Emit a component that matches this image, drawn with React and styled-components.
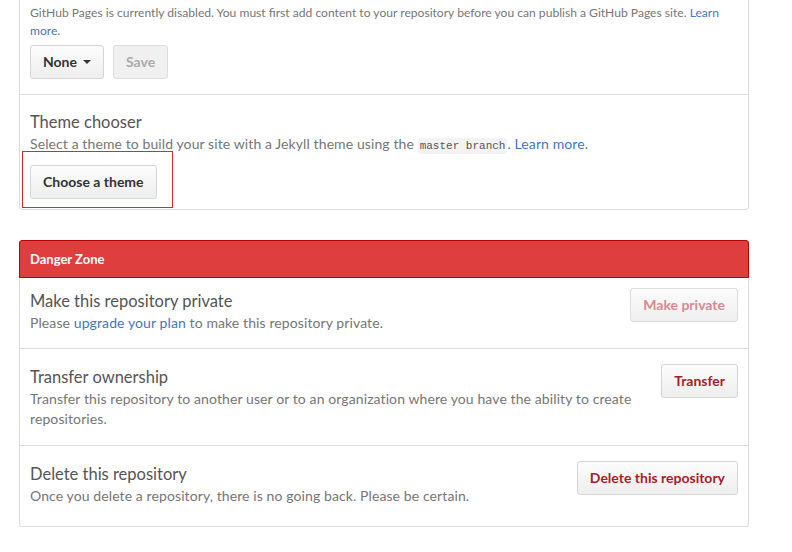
import React from 'react';
import styled, { createGlobalStyle } from 'styled-components';

const GlobalStyle = createGlobalStyle`
    body {
        margin: 0;
        background: #fff;
        font-family: Lato, "Liberation Sans", sans-serif;
        font-size: 13px;
        color: #333;
    }
`;

const Page = styled.div`
    width: 730px;
    margin: -12px 0 0 19px;
    display: flex;
    flex-direction: column;
    gap: 30px;
`;

const Box = styled.div`
    border: 1px solid #ddd;
    border-radius: 3px;
    background: #fff;
`;

const Section = styled.div`
    position: relative;
    padding: ${(p) => p.$pad || '15px 10px'};
    & + & {
        border-top: 1px solid #ddd;
    }
`;

const Note = styled.p`
    margin: 0;
    font-size: 12.1px;
    line-height: 18px;
    color: #767676;
`;

const Link = styled.a`
    color: #4078c0;
    text-decoration: none;
`;

const ButtonRow = styled.div`
    display: flex;
    gap: 9px;
    margin-top: ${(p) => p.$top || '5px'};
`;

const Button = styled.button`
    font-family: inherit;
    font-size: 14px;
    font-weight: 700;
    line-height: 20px;
    padding: 6px 12px;
    border: 1px solid #d5d5d5;
    border-radius: 3px;
    background: linear-gradient(#fcfcfc, #eee);
    color: ${(p) => (p.$danger ? '#a71d2a' : '#333')};
    white-space: nowrap;
    cursor: pointer;
    display: inline-flex;
    align-items: center;
    gap: 6px;
    flex-shrink: 0;
    &:disabled {
        cursor: default;
        color: ${(p) => (p.$danger ? '#d98a8f' : '#aaa')};
        background: ${(p) => (p.$danger ? 'linear-gradient(#fcfcfc, #eee)' : '#f0f0f0')};
        border-color: #ddd;
    }
`;

const Caret = styled.span`
    display: inline-block;
    border-top: 4px solid #333;
    border-left: 4px solid transparent;
    border-right: 4px solid transparent;
`;

const Title = styled.h3`
    margin: 0;
    font-size: 16.5px;
    font-weight: 400;
    line-height: 24px;
    color: #555;
`;

const Desc = styled.p`
    margin: 0;
    font-size: 14px;
    letter-spacing: 0.1px;
    line-height: 20px;
    color: #767676;
`;

const Code = styled.code`
    font-family: "Liberation Mono", monospace;
    font-size: 11px;
    letter-spacing: 0;
    padding: 2px 2px;
    background: #f3f3f3;
    border-radius: 3px;
    color: #555;
`;

const Highlight = styled.div`
    position: absolute;
    left: 2px;
    top: 56px;
    width: 149px;
    height: 55px;
    border: 1px solid #e8232a;
    pointer-events: none;
`;

const DangerHeader = styled.h3`
    margin: 0;
    padding: 9px 10px;
    font-size: 13px;
    font-weight: 700;
    line-height: 18px;
    color: #fff;
    background: #df3e3e;
    border: 1px solid #b00;
    border-radius: 3px 3px 0 0;
`;

const DangerBox = styled.div`
    border: 1px solid #ddd;
    border-top: 0;
    border-radius: 0 0 3px 3px;
`;

const Item = styled.div`
    display: flex;
    align-items: flex-start;
    gap: 12px;
    padding: ${(p) => p.$pad};
    & + & {
        border-top: 1px solid #ddd;
    }
`;

const ItemText = styled.div`
    flex: 1;
    padding-top: 1px;
`;

const dangerItems = [
    {
        title: 'Make this repository private',
        desc: (
            <>
                Please <Link href="#">upgrade your plan</Link> to make this repository private.
            </>
        ),
        action: 'Make private',
        disabled: true,
        pad: '10px 10px 15px',
    },
    {
        title: 'Transfer ownership',
        desc: 'Transfer this repository to another user or to an organization where you have the ability to create repositories.',
        action: 'Transfer',
        pad: '15px 10px 16px',
    },
    {
        title: 'Delete this repository',
        desc: 'Once you delete a repository, there is no going back. Please be certain.',
        action: 'Delete this repository',
        pad: '15px 10px 20px',
    },
];

export default function App() {
    return (
        <>
            <GlobalStyle />
            <Page>
                <Box>
                    <Section>
                        <Note>
                            GitHub Pages is currently disabled. You must first add content to your repository
                            before you can publish a GitHub Pages site. <Link href="#">Learn more.</Link>
                        </Note>
                        <ButtonRow>
                            <Button>
                                None <Caret />
                            </Button>
                            <Button disabled>Save</Button>
                        </ButtonRow>
                    </Section>
                    <Section $pad="15px 10px 10px">
                        <Title>Theme chooser</Title>
                        <Desc>
                            Select a theme to build your site with a Jekyll theme using the{' '}
                            <Code>master branch</Code>. <Link href="#">Learn more.</Link>
                        </Desc>
                        <ButtonRow $top="9px">
                            <Button>Choose a theme</Button>
                        </ButtonRow>
                        <Highlight />
                    </Section>
                </Box>
                <div>
                    <DangerHeader>Danger Zone</DangerHeader>
                    <DangerBox>
                        {dangerItems.map((item) => (
                            <Item key={item.title} $pad={item.pad}>
                                <ItemText>
                                    <Title>{item.title}</Title>
                                    <Desc>{item.desc}</Desc>
                                </ItemText>
                                <Button $danger disabled={item.disabled}>
                                    {item.action}
                                </Button>
                            </Item>
                        ))}
                    </DangerBox>
                </div>
            </Page>
        </>
    );
}
